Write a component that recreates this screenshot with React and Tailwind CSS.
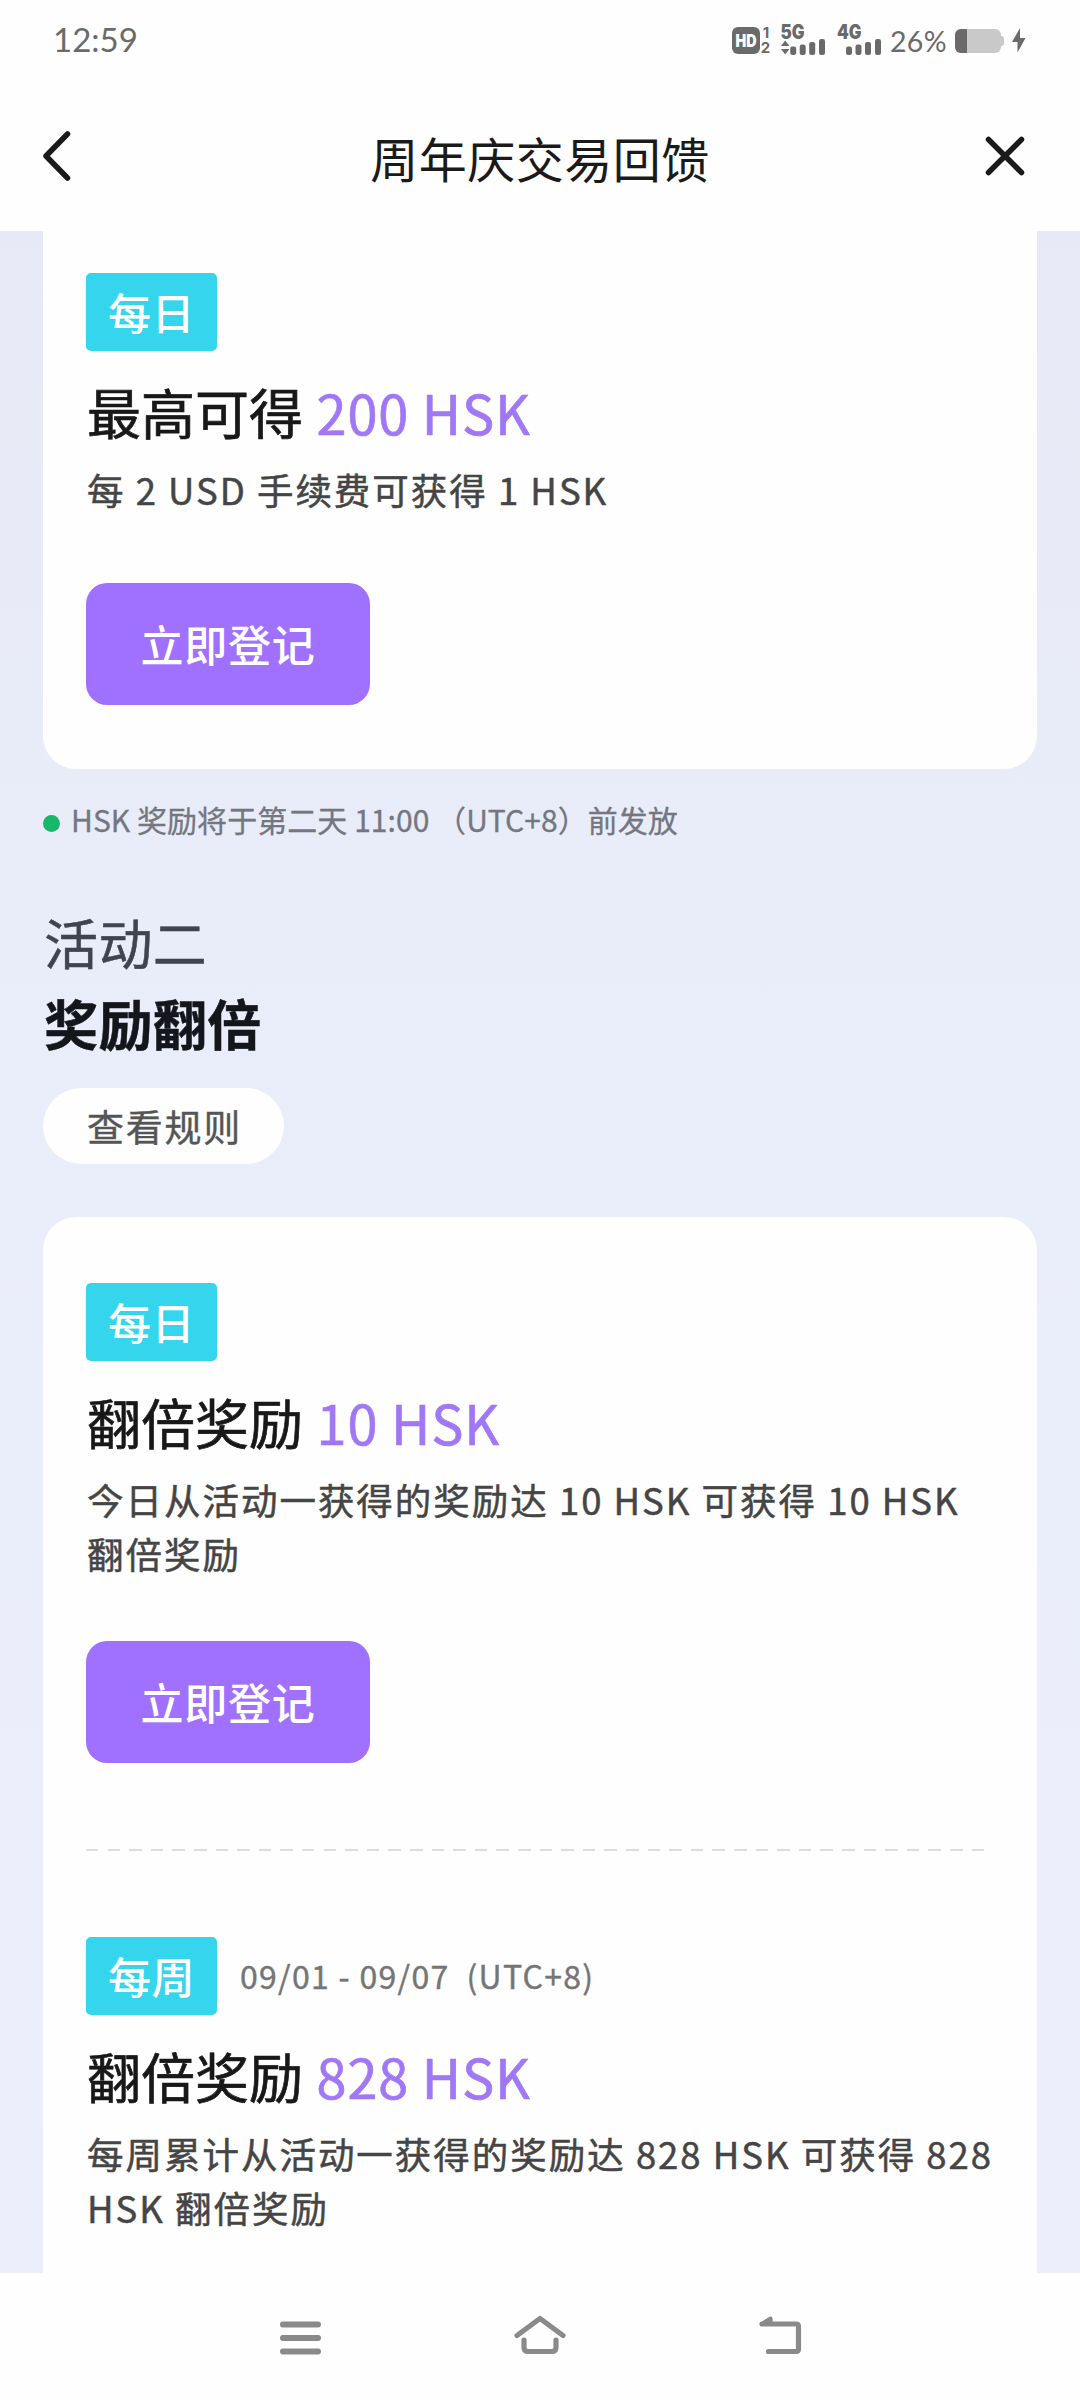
const battery = 26;

function StatusIcons() {
  return (
    <div className="flex items-center text-[#6a6a6a]">
      {/* HD + sim numbers, 5G and 4G signal */}
      <svg width="155" height="42" viewBox="0 -5 155 42" fill="currentColor" className="overflow-visible font-['Inter',sans-serif]">
        <rect x="0" y="3" width="28" height="27" rx="6" />
        <text x="14" y="22.5" fontSize="17" fontWeight="900" fill="#fff" textAnchor="middle" textLength="21" lengthAdjust="spacingAndGlyphs">HD</text>
        <text x="34" y="13.5" fontSize="15" fontWeight="700" textAnchor="middle">1</text>
        <text x="28.8" y="29.3" fontSize="15" fontWeight="700">2</text>

        <text x="48.5" y="15" fontSize="19.5" fontWeight="900" textLength="24" lengthAdjust="spacingAndGlyphs">5G</text>
        <path d="M49 22l4.2-5.500 4.2 5.500zM49 25h8.400l-4.2 5.500z" />
        <rect x="58.2" y="22.5" width="6" height="8.5" rx="2.2" />
        <rect x="67.7" y="20.5" width="6" height="10.5" rx="2.2" />
        <rect x="77.2" y="18" width="6" height="13" rx="2.2" />
        <rect x="87" y="15" width="6" height="16" rx="2.2" />

        <text x="105" y="15" fontSize="19.5" fontWeight="900" textLength="24.5" lengthAdjust="spacingAndGlyphs">4G</text>
        <rect x="114" y="22.5" width="6" height="8.5" rx="2.2" />
        <rect x="123.5" y="20.5" width="6" height="10.5" rx="2.2" />
        <rect x="133" y="18" width="6" height="13" rx="2.2" />
        <rect x="143" y="15" width="6" height="16" rx="2.2" />
      </svg>
      <span className="mt-0.5 ml-[3px] w-16 font-['Lato',sans-serif] text-[28.5px] leading-8 tracking-[0.3px]">{battery}%</span>
      <div className="mt-px ml-px flex items-center">
        <div className="flex h-6 w-[46px] overflow-hidden rounded-[6px] bg-[#c9c9c9]">
          <div className="bg-[#6a6a6a]" style={{ width: `${battery}%` }}></div>
        </div>
        <div className="h-2.5 w-[3px] rounded-r-sm bg-[#c9c9c9]"></div>
      </div>
      <svg width="14" height="25" viewBox="0 0 14 25" fill="currentColor" className="ml-2">
        <path d="M8 0L0 14h5.500L5.500 24.500 13.500 10H8z" />
      </svg>
    </div>
  );
}

function Badge({ children }) {
  return (
    <div className="flex h-[78px] w-[131px] items-center justify-center rounded-[5px] bg-[#35d6ed] pb-0.5 text-[43px] leading-[64px] font-medium tracking-[0.5px] text-white">
      {children}
    </div>
  );
}

function RegisterButton() {
  return (
    <button className="flex h-[122px] w-[284px] items-center justify-center rounded-[21px] bg-[#a070ff] pb-px text-[43px] font-medium tracking-[0.8px] text-white">
      立即登记
    </button>
  );
}

function Reward({ badge, period, title, amount, children }) {
  return (
    <div>
      <div className="flex items-center">
        <Badge>{badge}</Badge>
        {period && <span className="-mt-[3px] ml-[23px] text-[32px] whitespace-pre tracking-[1.3px] text-[#757575] [-webkit-text-stroke:0.4px]">{period}</span>}
      </div>
      <h3 className="mt-[21px] pl-px text-[54px] leading-20 text-[#181818] [-webkit-text-stroke:0.7px]">
        {title} <span className="ml-[1.5px] tracking-[0.8px] text-[#a078f5]">{amount}</span>
      </h3>
      <p className="mt-[11px] pl-px text-[36.5px] leading-[54px] tracking-[1.98px] whitespace-pre-line text-[#454545] [-webkit-text-stroke:0.5px]">{children}</p>
    </div>
  );
}

export default function App() {
  return (
    <div className="flex h-[2400px] w-[1080px] flex-col overflow-hidden bg-[#fefefe] font-['Noto_Sans_CJK_SC',sans-serif]">
      {/* Status bar */}
      <div className="flex h-20 shrink-0 items-center justify-between pr-[54px] pl-[53px]">
        <span className="font-['Lato',sans-serif] text-[33px] text-[#6a6a6a]">12:59</span>
        <StatusIcons />
      </div>

      {/* Title bar */}
      <header className="flex h-[151px] shrink-0 items-center justify-between pr-[55px] pl-[43px] text-[#1a1a1a]">
        <svg width="40" height="50" viewBox="0 0 40 50" fill="none" stroke="currentColor" strokeWidth="5.5" strokeLinecap="round" strokeLinejoin="round">
          <path d="M24.500 3L3 25l21.500 22" />
        </svg>
        <h1 className="pt-[3px] pl-3 text-[48px] tracking-[0.5px]">周年庆交易回馈</h1>
        <svg width="40" height="40" viewBox="0 0 40 40" fill="none" stroke="currentColor" strokeWidth="5.5" strokeLinecap="round">
          <path d="M3.500 3.500l33 33M36.500 3.500l-33 33" />
        </svg>
      </header>

      {/* Content */}
      <main className="min-h-0 flex-1 overflow-hidden bg-linear-to-b from-[#e8e9f6] via-[#e9edf9] via-35% to-[#edeefc] px-[43px]">
        <section className="h-[538px] rounded-b-[33px] bg-[#fefefe] px-[43px] pt-[42px]">
          <Reward badge="每日" title="最高可得" amount="200 HSK">每 2 USD 手续费可获得 1 HSK</Reward>
          <div className="mt-[66px]">
            <RegisterButton />
          </div>
        </section>

        <div className="mt-7 flex h-11 items-center text-[30px] tracking-[0.05px] text-[#747680] [-webkit-text-stroke:0.3px]">
          <span className="mt-2 mr-[11px] size-[17px] rounded-full bg-[#14b866]"></span>
          HSK 奖励将于第二天 11:00 （UTC+8）前发放
        </div>

        <div className="mt-[60px] pl-px text-[54px] leading-[81px] tracking-[0.4px]">
          <h2 className="text-[#41434e] [-webkit-text-stroke:0.5px]">活动二</h2>
          <h2 className="font-bold text-[#15161c] [-webkit-text-stroke:0.5px]">奖励翻倍</h2>
        </div>
        <button className="mt-[25px] flex h-19 w-[241px] items-center justify-center rounded-full bg-[#fefefe] pt-0.5 pl-0.5 text-[37px] tracking-[1.8px] text-[#555] [-webkit-text-stroke:0.4px]">
          查看规则
        </button>

        <section className="mt-[53px] h-[1100px] rounded-t-[33px] bg-[#fefefe] px-[43px] pt-[66px]">
          <Reward badge="每日" title="翻倍奖励" amount="10 HSK">{'今日从活动一获得的奖励达 10 HSK 可获得 10 HSK\n翻倍奖励'}</Reward>
          <div className="mt-[60px]">
            <RegisterButton />
          </div>
          <div className="my-[86px] h-0.5 w-[898px] bg-[repeating-linear-gradient(90deg,#dcdcdc_0_12.5px,transparent_12.5px_21.6px)]"></div>
          <Reward badge="每周" period="09/01 - 09/07  (UTC+8)" title="翻倍奖励" amount="828 HSK">{'每周累计从活动一获得的奖励达 828 HSK 可获得 828\nHSK 翻倍奖励'}</Reward>
        </section>
      </main>

      {/* Navigation bar */}
      <nav className="flex h-[127px] shrink-0 items-center justify-center gap-[189px] text-[#8a8a8a]">
        <svg width="50" height="50" viewBox="0 0 50 50" fill="none" stroke="currentColor" strokeWidth="6" strokeLinecap="round">
          <path d="M8 12.500h35M8 26h35M8 39.500h35" />
        </svg>
        <svg width="52" height="50" viewBox="0 0 52 50" fill="none" stroke="currentColor" strokeWidth="5.2" strokeLinecap="round" strokeLinejoin="round">
          <path d="M3 23.500L26 6.500l23 17M10 28v7.500q0 4 4 4h24q4 0 4-4V28" />
        </svg>
        <svg width="50" height="50" viewBox="0 0 50 50" fill="none" stroke="currentColor" strokeWidth="5.2" strokeLinecap="round" strokeLinejoin="round">
          <path d="M7 12h34q2.500 0 2.500 2.500v22.500q0 2.500-2.500 2.500H13.500" />
          <path d="M15.500 6.500L7 12h9z" strokeWidth="4" fill="currentColor" />
        </svg>
      </nav>
    </div>
  );
}
